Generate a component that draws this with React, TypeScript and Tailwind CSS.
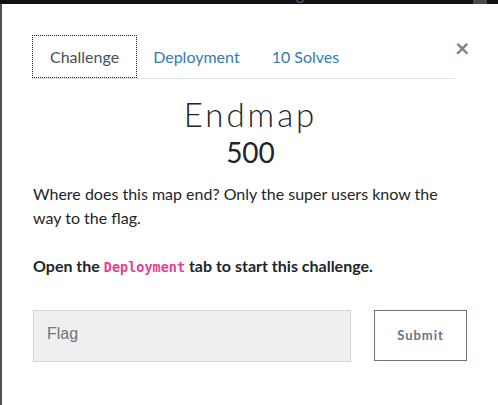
import React from "react";

export default function App() {
  const lato = { fontFamily: "Lato, 'Noto Sans', sans-serif" } as React.CSSProperties;
  return (
    <div className="flex h-[405px] w-[498px] flex-col overflow-hidden bg-[#0e1013]" style={lato}>
      <div className="relative h-[4px] shrink-0 overflow-hidden bg-[#0e1013]">
        <div className="absolute left-0 top-[-16px] flex items-center text-[16px] leading-[20px] text-[#5f6469]">
          <span className="ml-[3px]">c</span>
          <span className="ml-[16px]">Prizes</span>
          <span className="ml-[20px]">Users</span>
          <span className="ml-[18px]">Scoreboard</span>
          <span className="ml-[18px]">Challenges</span>
        </div>
        <div className="absolute left-[473px] top-0 h-[4px] w-[14px] bg-[#4a4d50]" />
      </div>
      <div className="flex flex-1">
        <div className="w-[2px] shrink-0 bg-[#4f5256]" />
        <div className="flex-1 bg-white pl-[30px] pr-[29px] pt-[31px]">
          <div className="flex items-start">
            <div className="flex flex-1 border-b border-[#dee2e6]">
              <div className="mb-[-1px] flex h-[43px] items-center border border-dotted border-[#222] px-[17px] text-[16px] text-[#495057]">
                Challenge
              </div>
              <div className="flex h-[43px] items-center px-[16px] text-[16px] text-[#337ab7]">Deployment</div>
              <div className="flex h-[43px] items-center px-[16px] text-[16px] text-[#337ab7]">10 Solves</div>
            </div>
            <div className="flex w-[14px] justify-start text-[25px] font-bold leading-[24px] text-[#808080]">×</div>
          </div>
          <div className="mt-[15px] text-center text-[33px] font-light leading-[40px] tracking-[3px] text-[#212529]">
            Endmap
          </div>
          <div className="text-center text-[28px] leading-[36px] text-[#212529]">500</div>
          <p className="mt-[12px] pl-[1px] text-[16px] leading-[24px] text-[#212529]">
            Where does this map end? Only the super users know the way to the flag.
          </p>
          <p className="mt-[24px] pl-[1px] text-[16px] font-bold leading-[24px] text-[#212529]">
            Open the{" "}
            <code
              className="text-[13.5px] font-bold text-[#e83e8c]"
              style={{ fontFamily: "'DejaVu Sans Mono', 'Liberation Mono', monospace" }}
            >
              Deployment
            </code>{" "}
            tab to start this challenge.
          </p>
          <div className="mt-[31px] flex pl-[1px]">
            <div
              className="flex h-[52px] w-[318px] items-center border border-[#cfd6de] bg-[#efefef] pl-[13px] pb-[4px] text-[16px] text-[#6c757d]"
              style={{ fontFamily: "'Liberation Sans', Arial, sans-serif" }}
            >
              Flag
            </div>
            <div className="ml-[23px] flex h-[51px] w-[93px] items-center justify-center border border-[#6c757d] text-[13px] font-bold tracking-[1px] text-[#6c757d]">
              Submit
            </div>
          </div>
        </div>
      </div>
    </div>
  );
}
